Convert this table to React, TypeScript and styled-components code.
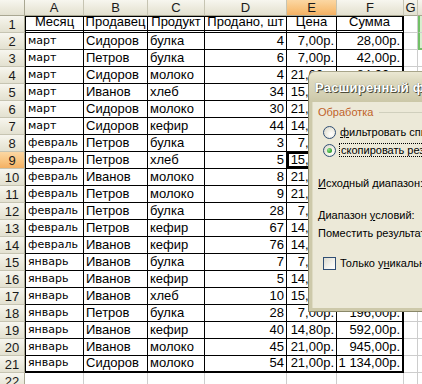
import React from "react";
import styled, { createGlobalStyle, css } from "styled-components";

const GlobalStyle = createGlobalStyle`
  html, body { margin: 0; padding: 0; background: #ffffff; overflow: hidden; }
`;

const Screen = styled.div`
  position: relative;
  width: 422px;
  height: 384px;
  overflow: hidden;
  background: #ffffff;
  font-family: "Liberation Sans", Arial, sans-serif;
`;

const Sheet = styled.div`
  display: grid;
  grid-template-columns: 25px 59px 64px 57px 82px 50px 67px 14px 40px;
  grid-template-rows: 16px repeat(22, 17px);
`;

const headerBg = css`
  background: linear-gradient(#f7f6ef, #ebe9db 60%, #e3e1d1);
`;
const selectedBg = css`
  background: linear-gradient(#fbd7a3, #f8c27c 60%, #f3b064);
`;

const Corner = styled.div`
  box-sizing: border-box;
  ${headerBg};
  border-right: 1px solid #a9a792;
  border-bottom: 1px solid #a9a792;
`;

const ColHeader = styled.div<{ $selected?: boolean }>`
  box-sizing: border-box;
  ${(p) => (p.$selected ? selectedBg : headerBg)};
  border-right: 1px solid #c6c4b2;
  border-bottom: 1px solid #a9a792;
  display: flex;
  align-items: center;
  justify-content: center;
  font-size: 13px;
  line-height: 15px;
  color: #1a1a1a;
  overflow: hidden;
`;

const RowHeader = styled.div<{ $selected?: boolean }>`
  box-sizing: border-box;
  ${(p) => (p.$selected ? selectedBg : headerBg)};
  border-right: 1px solid #a9a792;
  border-bottom: 1px solid #c6c4b2;
  display: flex;
  align-items: flex-start;
  justify-content: center;
  padding-top: 1px;
  font-size: 13px;
  line-height: 15px;
  color: #1a1a1a;
  overflow: hidden;
`;

type Align = "left" | "right" | "center";

const Cell = styled.div<{
  $align?: Align;
  $data?: boolean;
  $month?: boolean;
  $top?: boolean;
  $left?: boolean;
  $thickRight?: boolean;
  $thickBottom?: boolean;
  $doubleBottom?: boolean;
  $active?: boolean;
  $green?: boolean;
  $greenBottom?: boolean;
}>`
  box-sizing: border-box;
  display: flex;
  align-items: flex-end;
  justify-content: ${(p) =>
    p.$align === "right" ? "flex-end" : p.$align === "center" ? "center" : "flex-start"};
  padding: 0 2px 1px 2px;
  white-space: nowrap;
  overflow: hidden;
  color: #000;
  font-size: 13px;
  line-height: 15px;
  border-right: 1px solid ${(p) => (p.$data ? "#000" : "#cdcdcd")};
  border-bottom: 1px solid ${(p) => (p.$data ? "#000" : "#cdcdcd")};
  ${(p) =>
    p.$month &&
    css`
      font-family: "DejaVu Sans", Verdana, sans-serif;
      font-size: 11px;
      line-height: 14px;
    `}
  ${(p) => p.$top && css`border-top: 1px solid #000;`}
  ${(p) => p.$left && css`border-left: 1px solid #000;`}
  ${(p) => p.$thickRight && css`border-right: 2px solid #000;`}
  ${(p) => p.$doubleBottom && css`border-bottom: 3px double #000;`}
  ${(p) => p.$thickBottom && css`border-bottom: 2px solid #000;`}
  ${(p) => p.$active && css`box-shadow: inset 0 0 0 2px #000;`}
  ${(p) =>
    p.$green &&
    css`
      background: #d8eecf;
      border-left: 2px solid #72c067;
    `}
  ${(p) => p.$greenBottom && css`border-bottom: 2px solid #72c067;`}
`;

/* ---------- dialog ---------- */

const Dialog = styled.div`
  position: absolute;
  left: 308px;
  top: 71px;
  width: 240px;
  height: 241px;
  display: flex;
  flex-direction: column;
  background: #cdc9aa;
  border-left: 1px solid #8a8869;
  border-top: 1px solid #a8a58a;
  border-bottom: 1px solid #8a8869;
  border-top-left-radius: 7px;
  overflow: hidden;
  box-sizing: border-box;
`;

const TitleBar = styled.div`
  flex: none;
  height: 30px;
  display: flex;
  align-items: center;
  padding-left: 6px;
  background: linear-gradient(#ebe8d3, #ddd9bf 30%, #d3cfb2 75%, #cbc7a7);
  font-family: "Liberation Sans", Arial, sans-serif;
  font-weight: bold;
  font-size: 13px;
  letter-spacing: 0.2px;
  color: #ffffff;
  text-shadow: 1px 1px 0 #4f4d3a, 0 0 1px #66644e;
  white-space: nowrap;
`;

const Body = styled.div`
  flex: 1;
  margin: 0 0 3px 3px;
  border-left: 1px solid #dedbc3;
  background: #ece9d8;
  padding: 3px 0 0 5px;
  display: flex;
  flex-direction: column;
  font-family: "Liberation Sans", Tahoma, sans-serif;
  font-size: 11px;
  color: #000;
  white-space: nowrap;
`;

const GroupLegend = styled.div`
  height: 14px;
  display: flex;
  align-items: center;
  color: #c0622a;
`;

const GroupLine = styled.span`
  flex: 1;
  height: 1px;
  margin-left: 6px;
  background: #d0cfbd;
`;

const OptionRow = styled.div<{ $gap?: number }>`
  height: 18px;
  display: flex;
  align-items: center;
  gap: 4px;
  padding-left: 5px;
  margin-top: ${(p) => p.$gap ?? 0}px;
`;

const Radio = styled.span<{ $checked?: boolean }>`
  flex: none;
  box-sizing: border-box;
  width: 13px;
  height: 13px;
  border-radius: 50%;
  border: 1px solid #2f4e74;
  background: radial-gradient(circle at 65% 65%, #ffffff 0%, #f1efe6 40%, #d6d4c6 100%);
  display: flex;
  align-items: center;
  justify-content: center;
  &::after {
    content: "";
    display: ${(p) => (p.$checked ? "block" : "none")};
    width: 5px;
    height: 5px;
    border-radius: 50%;
    background: radial-gradient(circle at 35% 35%, #8ee58a, #2f9d2b 70%, #1f7a1c);
  }
`;

const Check = styled.span`
  flex: none;
  box-sizing: border-box;
  width: 13px;
  height: 13px;
  border: 1px solid #2f4e74;
  background: linear-gradient(135deg, #dcdbd0, #f5f4ee 60%, #ffffff);
`;

const Focused = styled.span`
  outline: 1px dotted #000;
  outline-offset: 0;
  padding: 0 1px;
`;

const FieldRow = styled.div<{ $gap?: number }>`
  height: 18px;
  display: flex;
  align-items: center;
  margin-top: ${(p) => p.$gap ?? 0}px;
`;

const Key = styled.span`
  text-decoration: underline;
`;

/* ---------- data ---------- */

const cols = ["A", "B", "C", "D", "E", "F", "G", "H"];

const data: string[][] = [
  ["Месяц", "Продавец", "Продукт", "Продано, шт", "Цена", "Сумма"],
  ["март", "Сидоров", "булка", "4", "7,00р.", "28,00р."],
  ["март", "Петров", "булка", "6", "7,00р.", "42,00р."],
  ["март", "Сидоров", "молоко", "4", "21,00р.", "84,00р."],
  ["март", "Иванов", "хлеб", "34", "15,00р.", "510,00р."],
  ["март", "Сидоров", "молоко", "30", "21,00р.", "630,00р."],
  ["март", "Сидоров", "кефир", "44", "14,80р.", "651,20р."],
  ["февраль", "Петров", "булка", "3", "7,00р.", "21,00р."],
  ["февраль", "Петров", "хлеб", "5", "15,00р.", "75,00р."],
  ["февраль", "Иванов", "молоко", "8", "21,00р.", "168,00р."],
  ["февраль", "Петров", "молоко", "9", "21,00р.", "189,00р."],
  ["февраль", "Петров", "булка", "28", "7,00р.", "196,00р."],
  ["февраль", "Петров", "кефир", "67", "14,80р.", "991,60р."],
  ["февраль", "Иванов", "кефир", "76", "14,80р.", "1 124,80р."],
  ["январь", "Иванов", "булка", "7", "7,00р.", "49,00р."],
  ["январь", "Иванов", "кефир", "5", "14,80р.", "74,00р."],
  ["январь", "Иванов", "хлеб", "10", "15,00р.", "150,00р."],
  ["январь", "Петров", "булка", "28", "7,00р.", "196,00р."],
  ["январь", "Иванов", "кефир", "40", "14,80р.", "592,00р."],
  ["январь", "Иванов", "молоко", "45", "21,00р.", "945,00р."],
  ["январь", "Сидоров", "молоко", "54", "21,00р.", "1 134,00р."],
];

export default function App() {
  const rowNums = Array.from({ length: 22 }, (_, i) => i + 1);
  return (
    <Screen>
      <GlobalStyle />
      <Sheet>
        <Corner />
        {cols.map((c) => (
          <ColHeader key={c} $selected={c === "E"}>
            {c}
          </ColHeader>
        ))}
        {rowNums.map((r) => {
          const row = data[r - 1];
          return (
            <React.Fragment key={r}>
              <RowHeader $selected={r === 9}>{r}</RowHeader>
              {row
                ? row.map((v, ci) => {
                    const header = r === 1;
                    const align: Align = header ? "center" : ci < 3 ? "left" : "right";
                    return (
                      <Cell
                        key={ci}
                        $data
                        $align={align}
                        $month={!header && ci === 0}
                        $top={header}
                        $left={ci === 0}
                        $thickRight={ci === 5}
                        $doubleBottom={header}
                        $thickBottom={r === 21}
                        $active={r === 9 && ci === 4}
                      >
                        {v}
                      </Cell>
                    );
                  })
                : cols.slice(0, 6).map((c) => <Cell key={c} />)}
              <Cell />
              <Cell $green={r <= 2} $greenBottom={r === 2} />
            </React.Fragment>
          );
        })}
      </Sheet>

      <Dialog>
        <TitleBar>Расширенный фильтр</TitleBar>
        <Body>
          <GroupLegend>
            Обработка
            <GroupLine />
          </GroupLegend>
          <OptionRow $gap={4}>
            <Radio />
            <span>
              <Key>ф</Key>ильтровать список на месте
            </span>
          </OptionRow>
          <OptionRow>
            <Radio $checked />
            <Focused>скопировать результат в другое место</Focused>
          </OptionRow>
          <FieldRow $gap={15}>
            <span>
              <Key>И</Key>сходный диапазон:
            </span>
          </FieldRow>
          <FieldRow $gap={14}>
            <span>
              Диапазон <Key>у</Key>словий:
            </span>
          </FieldRow>
          <FieldRow>
            <span>Поместить результат в диапазон:</span>
          </FieldRow>
          <OptionRow $gap={12}>
            <Check />
            <span>
              Только у<Key>н</Key>икальные записи
            </span>
          </OptionRow>
        </Body>
      </Dialog>
    </Screen>
  );
}
